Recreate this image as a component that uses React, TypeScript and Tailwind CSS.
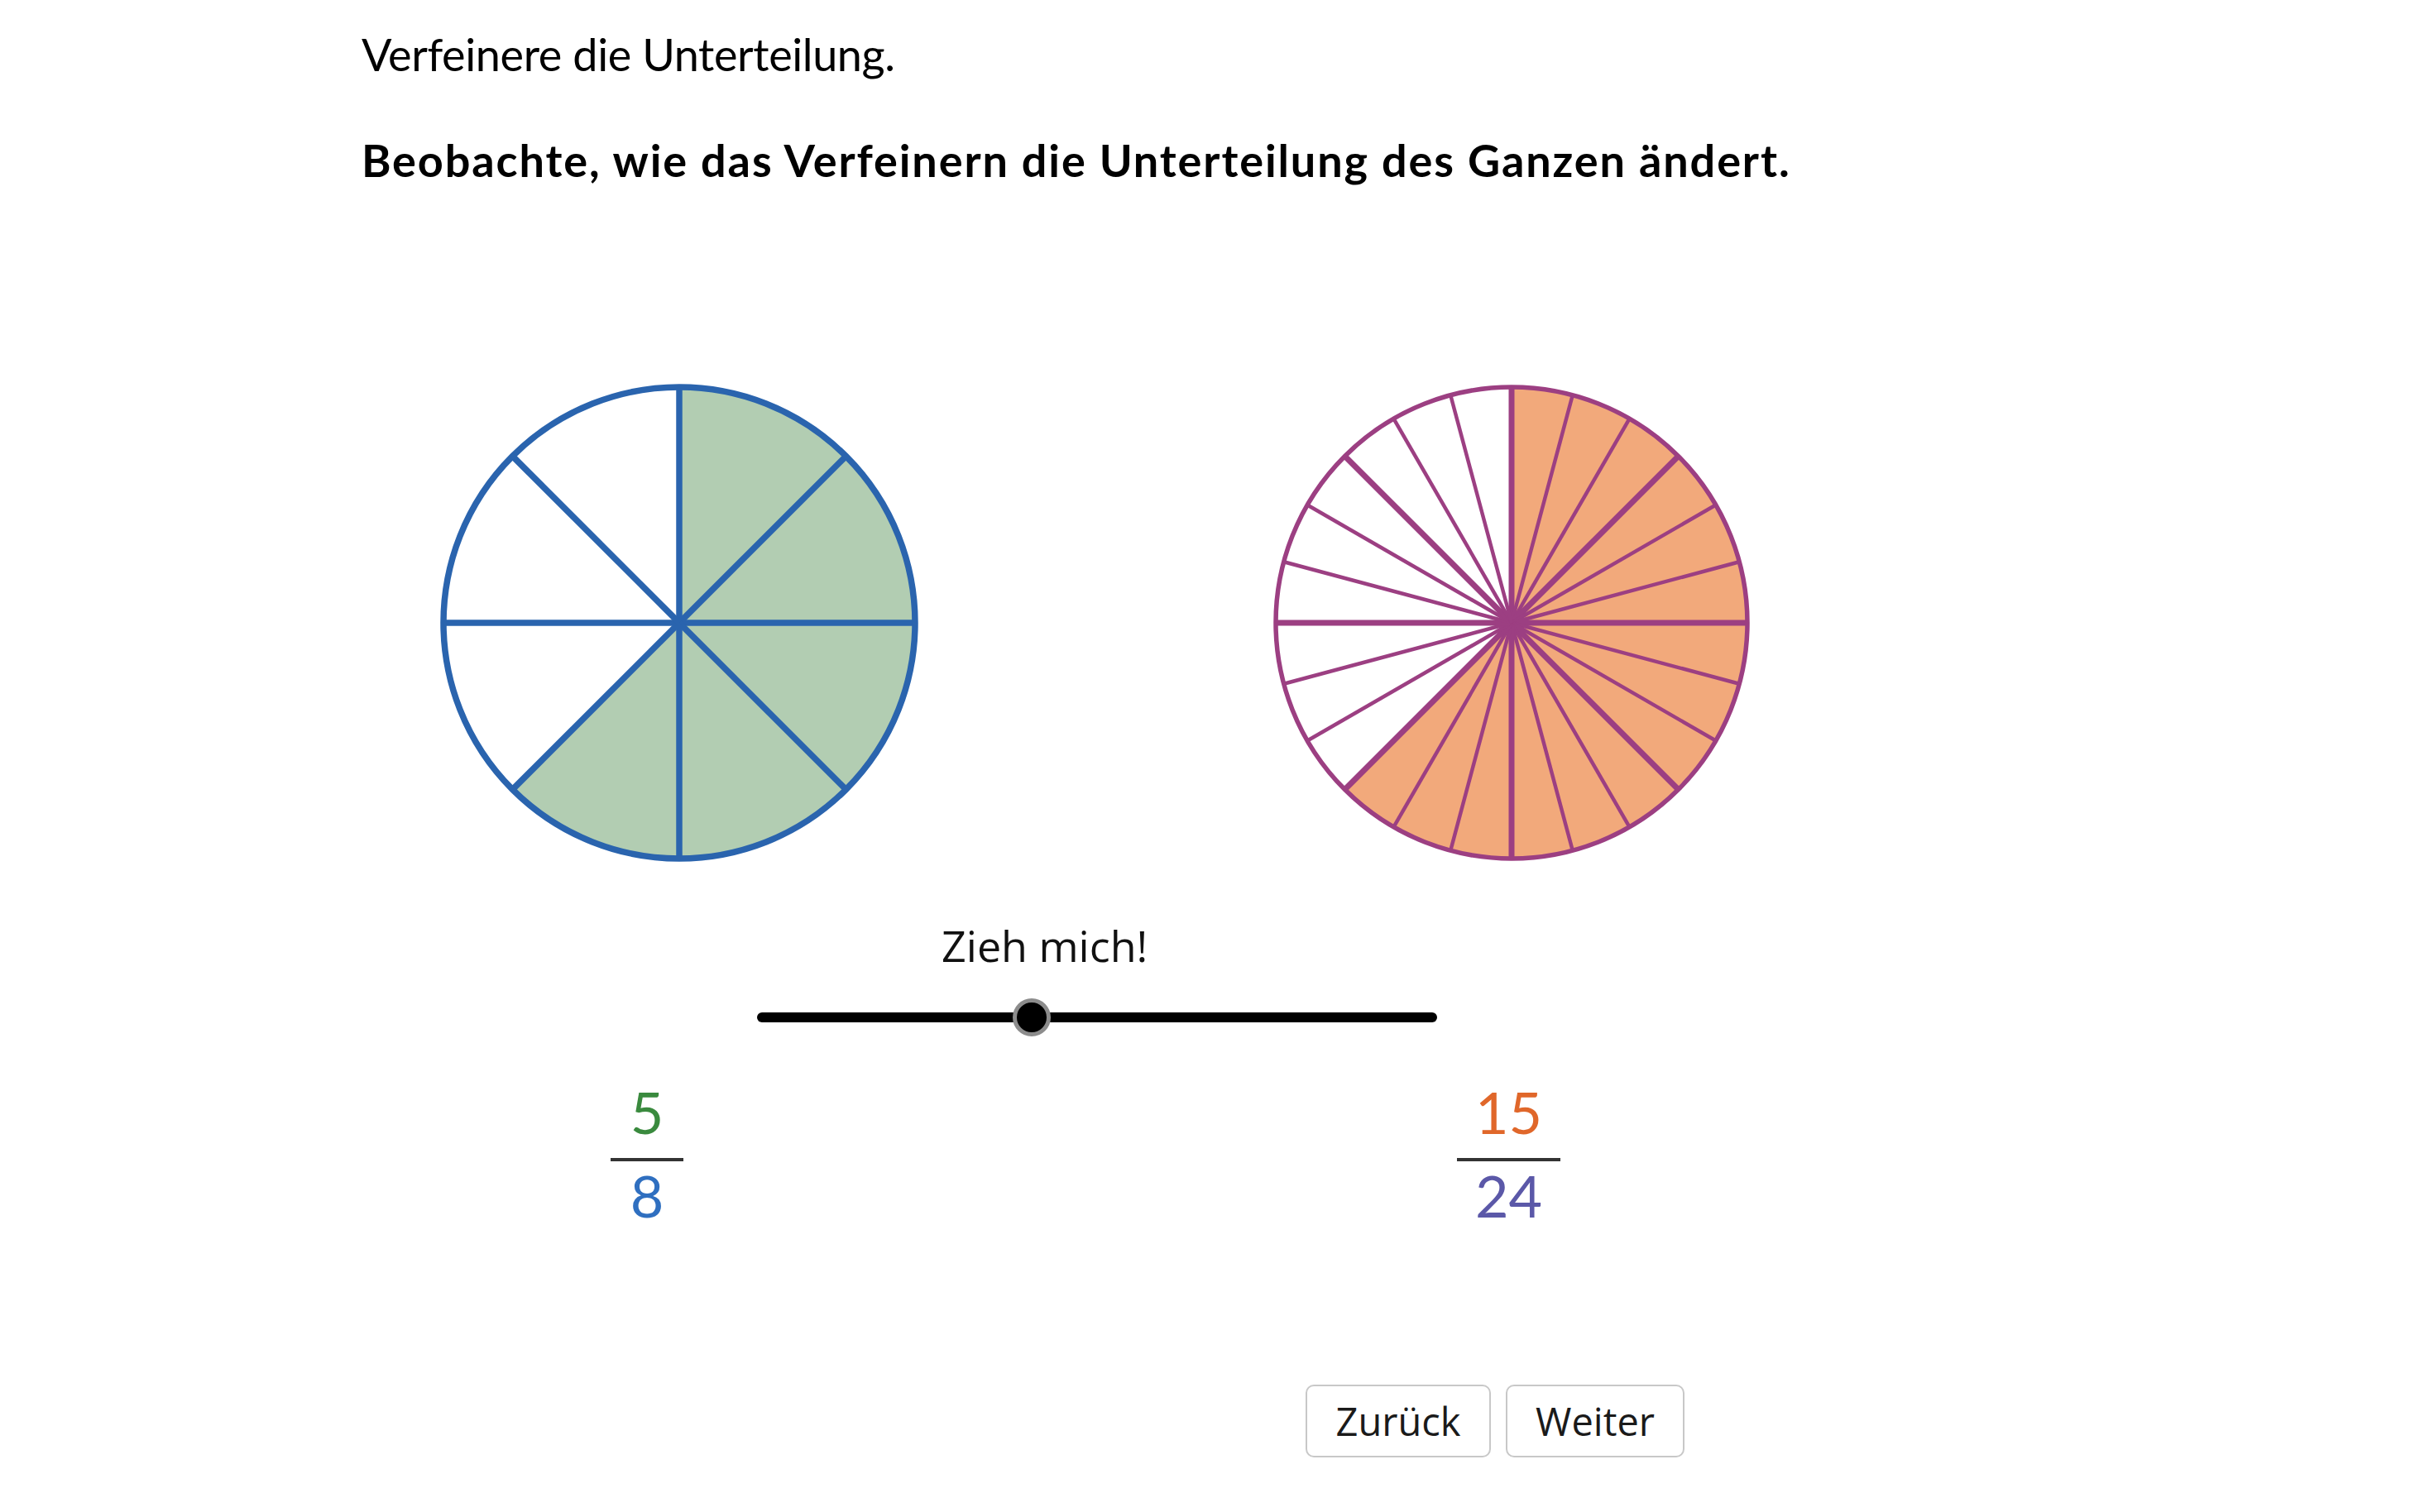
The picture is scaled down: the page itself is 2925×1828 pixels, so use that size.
import React from 'react';

// polar helper: angle measured clockwise from 12 o'clock
const pt = (c: number, r: number, a: number) => {
  const t = (a * Math.PI) / 180;
  return [c + r * Math.sin(t), c - r * Math.cos(t)];
};

function wedge(c: number, r: number, a0: number, a1: number) {
  const [x0, y0] = pt(c, r, a0);
  const [x1, y1] = pt(c, r, a1);
  return `M ${c} ${c} L ${x0} ${y0} A ${r} ${r} 0 0 1 ${x1} ${y1} Z`;
}

type PieProps = {
  parts: number;
  filled: number;
  stroke: string;
  fill: string;
  rim: number;
  thick: number;
  thin: number;
  every: number; // spokes on every n-th line are drawn thick
};

function Pie({ parts, filled, stroke, fill, rim, thick, thin, every }: PieProps) {
  const c = 300;
  const r = 285;
  const step = 360 / parts;
  return (
    <svg width="600" height="600" viewBox="0 0 600 600" className="shrink-0">
      <circle cx={c} cy={c} r={r} fill="#ffffff" />
      {Array.from({ length: filled }, (_, i) => (
        <path key={i} d={wedge(c, r, i * step, (i + 1) * step)} fill={fill} />
      ))}
      {Array.from({ length: parts }, (_, i) => {
        const [x, y] = pt(c, r, i * step);
        return (
          <line
            key={i}
            x1={c}
            y1={c}
            x2={x}
            y2={y}
            stroke={stroke}
            strokeWidth={i % every === 0 ? thick : thin}
          />
        );
      })}
      <circle cx={c} cy={c} r={r} fill="none" stroke={stroke} strokeWidth={rim} />
    </svg>
  );
}

function Fraction({ top, bottom, topColor, bottomColor, width }: { top: string; bottom: string; topColor: string; bottomColor: string; width: string }) {
  return (
    <div className={`flex flex-col items-center ${width}`}>
      <span className={`h-[70px] text-[70px] leading-[70px] ${topColor}`}>{top}</span>
      <div className="mt-[21px] h-[4px] w-full bg-[#333333]" />
      <span className={`mt-[6px] h-[70px] text-[70px] leading-[70px] ${bottomColor}`}>{bottom}</span>
    </div>
  );
}

export default function App() {
  return (
    <div className="h-[1828px] w-[2925px] overflow-hidden bg-white text-black font-['Lato',sans-serif]">
      <div className="pl-[437px] pt-[34px]">
        <p className="text-[54px] leading-[1.2] tracking-[-0.4px]">Verfeinere die Unterteilung.</p>
        <p className="mt-[63px] text-[54px] font-bold leading-[1.2] tracking-[1.9px]">
          Beobachte, wie das Verfeinern die Unterteilung des Ganzen ändert.
        </p>
      </div>

      {/* applet */}
      <div className="flex gap-[406px] pl-[521px] pt-[226px]">
        <Pie parts={8} filled={5} stroke="#2a64ae" fill="#b2cdb2" rim={7.5} thick={7.5} thin={7.5} every={1} />
        <Pie parts={24} filled={15} stroke="#9c3f82" fill="#f2a97b" rim={5.5} thick={7} thin={4.5} every={3} />
      </div>

      <p className="mt-[59px] pl-[1138px] text-[52px] leading-[1.2] text-[#111111] font-['Open_Sans',sans-serif]">
        Zieh mich!
      </p>

      <div className="relative ml-[915px] mt-[50px] h-[12px] w-[822px] rounded-full bg-black">
        <div className="absolute left-[309px] top-[-17px] h-[46px] w-[46px] rounded-full border-[5px] border-[#8c8c8c] bg-black" />
      </div>

      <div className="mt-[73px] flex gap-[935px] pl-[738px]">
        <Fraction top="5" bottom="8" topColor="text-[#3a8a3e]" bottomColor="text-[#2f6fc0]" width="w-[88px]" />
        <Fraction top="15" bottom="24" topColor="text-[#e0672a]" bottomColor="text-[#5b58a8]" width="w-[125px]" />
      </div>

      <div className="mt-[194px] flex gap-[18px] pl-[1578px] font-['Open_Sans',sans-serif]">
        <button className="flex h-[88px] w-[224px] items-center justify-center rounded-[10px] border-2 border-[#c8c8c8] bg-white text-[47px] text-[#1a1a1a]">
          Zurück
        </button>
        <button className="flex h-[88px] w-[216px] items-center justify-center rounded-[10px] border-2 border-[#c8c8c8] bg-white text-[47px] text-[#1a1a1a]">
          Weiter
        </button>
      </div>
    </div>
  );
}
